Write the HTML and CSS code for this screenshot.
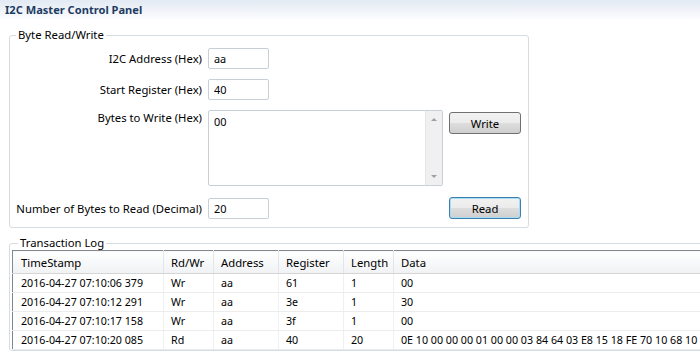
FILE: index.html
```html
<!DOCTYPE html>
<html lang="en">

<head>
    <meta charset="UTF-8" />
    <title>I2C Master Control Panel</title>
    <link rel="stylesheet" href="styles.css">
</head>

<body>

    <header class="titlebar">I2C Master Control Panel</header>

    <fieldset class="group rw">
        <legend>Byte Read/Write</legend>

        <div class="form">
            <label>I2C Address (Hex)</label>
            <div class="field">aa</div>
            <div></div>

            <label>Start Register (Hex)</label>
            <div class="field">40</div>
            <div></div>

            <label class="top">Bytes to Write (Hex)</label>
            <div class="textbox">
                <span class="text">00</span>
                <div class="scrollbar">
                    <span class="arrow up"></span>
                    <span class="arrow down"></span>
                </div>
            </div>
            <button class="btn top">Write</button>

            <label>Number of Bytes to Read (Decimal)</label>
            <div class="field">20</div>
            <button class="btn focus">Read</button>
        </div>
    </fieldset>

    <fieldset class="group log">
        <legend>Transaction Log</legend>

        <table>
            <thead>
                <tr>
                    <th class="c-time">TimeStamp</th>
                    <th class="c-rw">Rd/Wr</th>
                    <th class="c-addr">Address</th>
                    <th class="c-reg">Register</th>
                    <th class="c-len">Length</th>
                    <th>Data</th>
                </tr>
            </thead>
            <tbody>
                <tr>
                    <td>2016-04-27 07:10:06 379</td>
                    <td>Wr</td>
                    <td>aa</td>
                    <td>61</td>
                    <td>1</td>
                    <td>00</td>
                </tr>
                <tr>
                    <td>2016-04-27 07:10:12 291</td>
                    <td>Wr</td>
                    <td>aa</td>
                    <td>3e</td>
                    <td>1</td>
                    <td>30</td>
                </tr>
                <tr>
                    <td>2016-04-27 07:10:17 158</td>
                    <td>Wr</td>
                    <td>aa</td>
                    <td>3f</td>
                    <td>1</td>
                    <td>00</td>
                </tr>
                <tr>
                    <td>2016-04-27 07:10:20 085</td>
                    <td>Rd</td>
                    <td>aa</td>
                    <td>40</td>
                    <td>20</td>
                    <td>0E 10 00 00 00 01 00 00 03 84 64 03 E8 15 18 FE 70 10 68 10</td>
                </tr>
            </tbody>
        </table>
    </fieldset>

</body>

</html>
```

FILE: styles.css
```css
* {
    box-sizing: border-box;
    font-family: 'Noto Sans', 'Open Sans', sans-serif;
}

body {
    margin: 0;
    background-color: #ffffff;
    color: #000;
    font-size: 11.3px;
    width: 700px;
    height: 352px;
    overflow: hidden;
}

.titlebar {
    height: 20px;
    padding: 2px 5px 0;
    font-weight: bold;
    font-size: 11.1px;
    line-height: 16px;
    color: #1e3b63;
    background: linear-gradient(to bottom, #e3eaf3, #f7f9fc 80%, #ffffff);
}

.group {
    border: 1px solid #d5dde3;
    border-radius: 3px;
    margin: 7px 0 0 9px;
    padding: 0;
    min-width: 0;
}

.group legend {
    padding: 0 2px;
    margin-left: 6px;
    line-height: 16px;
}

.rw {
    width: 520px;
    padding: 5px 7px 8px 0;
}

.form {
    display: grid;
    grid-template-columns: 193px 235px 72px;
    column-gap: 5px;
    row-gap: 10px;
    align-items: center;
}

.form > :nth-child(3n) {
    margin-left: 1px;
}

.form label {
    text-align: right;
    padding-right: 1px;
    white-space: nowrap;
}

.form .top {
    align-self: start;
}

.field {
    width: 61px;
    height: 21px;
    border: 1px solid #c8cfd6;
    border-radius: 2px;
    padding: 1px 5px;
    line-height: 17px;
    font-size: 10.9px;
}

.textbox {
    height: 76px;
    border: 1px solid #c8cfd6;
    border-radius: 2px;
    display: flex;
    margin-bottom: 1px;
}

.textbox .text {
    flex: 1;
    padding: 3px 5px;
    line-height: 16px;
    font-size: 10.9px;
}

.scrollbar {
    width: 17px;
    background-color: #f0f0f0;
    border-left: 1px solid #e6e6e6;
    display: flex;
    flex-direction: column;
    justify-content: space-between;
    align-items: center;
    padding: 7px 0 7px;
}

.arrow {
    width: 0;
    height: 0;
    border-left: 3px solid transparent;
    border-right: 3px solid transparent;
}

.arrow.up {
    border-bottom: 3px solid #a0a0a0;
}

.arrow.down {
    border-top: 3px solid #a0a0a0;
}

.btn {
    width: 72px;
    height: 22px;
    font-size: 11.3px;
    color: #000;
    border: 1px solid #707070;
    border-radius: 3px;
    background: linear-gradient(to bottom, #f2f2f2 0%, #ebebeb 48%, #dddddd 52%, #cfcfcf 100%);
    padding: 0;
}

.btn.top {
    margin-top: 2px;
}

.btn.focus {
    border-color: #3c7fb1;
    box-shadow: inset 0 0 0 1px #a8dcf3;
}

.log {
    width: 760px;
    padding: 0 0 0 2px;
}

table {
    border-collapse: collapse;
    border: 1px solid #828790;
    border-right: none;
    width: 740px;
    margin-top: -1px;
}

th {
    height: 23px;
    font-weight: normal;
    text-align: left;
    padding: 0 0 0 7px;
    background: linear-gradient(to bottom, #ffffff, #f7f8f9 50%, #f1f2f4);
    border-bottom: 1px solid #d5d5d5;
    border-right: 1px solid #e3e5e8;
}

td {
    height: 19px;
    padding: 0 0 0 7px;
    font-size: 10.7px;
    border-bottom: 1px solid #ececec;
    border-right: 1px solid #f0f0f0;
    white-space: nowrap;
}

th:first-child,
td:first-child {
    padding-left: 8px;
}

.c-time {
    width: 151px;
}

.c-rw {
    width: 50px;
}

.c-addr {
    width: 65px;
}

.c-reg {
    width: 65px;
}

.c-len {
    width: 50px;
}
```
